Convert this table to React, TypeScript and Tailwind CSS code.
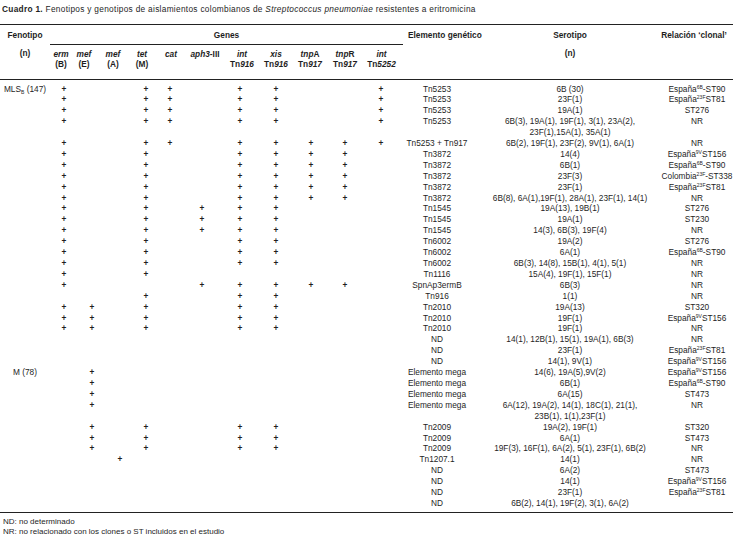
import React from 'react';

const Sup = ({ t }: { t: string }) => (
  <span className="relative -top-[3px] text-[5px] leading-[0]">{t}</span>
);
const Esp = (s: string, rest: string) => (
  <span>
    España
    <Sup t={s} />
    {rest}
  </span>
);

type Row = {
  fen?: React.ReactNode;
  p: number[];
  el: string;
  sero: React.ReactNode;
  rel: React.ReactNode;
};

const A = [0, 3, 4, 6, 7, 10];
const B = [0, 3, 4, 6, 7, 8, 9, 10];
const C = [0, 3, 6, 7, 8, 9];
const D = [0, 3, 5, 6, 7];
const F = [0, 3, 6, 7];
const G = [0, 1, 3, 6, 7];
const H = [1, 3, 6, 7];

const rows: Row[] = [
  {
    fen: (
      <span>
        MLS
        <span className="relative top-[2px] text-[5px] leading-[0]">B</span>
        &nbsp;(147)
      </span>
    ),
    p: A,
    el: 'Tn5253',
    sero: '6B (30)',
    rel: Esp('6B', '-ST90'),
  },
  { p: A, el: 'Tn5253', sero: '23F(1)', rel: Esp('23F', 'ST81') },
  { p: A, el: 'Tn5253', sero: '19A(1)', rel: 'ST276' },
  {
    p: A,
    el: 'Tn5253',
    sero: (
      <>
        <div>6B(3), 19A(1), 19F(1), 3(1), 23A(2),</div>
        <div>23F(1),15A(1), 35A(1)</div>
      </>
    ),
    rel: 'NR',
  },
  { p: B, el: 'Tn5253 + Tn917', sero: '6B(2), 19F(1), 23F(2), 9V(1), 6A(1)', rel: 'NR' },
  { p: C, el: 'Tn3872', sero: '14(4)', rel: Esp('9V', 'ST156') },
  { p: C, el: 'Tn3872', sero: '6B(1)', rel: Esp('6B', '-ST90') },
  {
    p: C,
    el: 'Tn3872',
    sero: '23F(3)',
    rel: (
      <span>
        Colombia
        <Sup t="23F" />
        -ST338
      </span>
    ),
  },
  { p: C, el: 'Tn3872', sero: '23F(1)', rel: Esp('23F', 'ST81') },
  { p: C, el: 'Tn3872', sero: '6B(8), 6A(1),19F(1), 28A(1), 23F(1), 14(1)', rel: 'NR' },
  { p: D, el: 'Tn1545', sero: '19A(13), 19B(1)', rel: 'ST276' },
  { p: D, el: 'Tn1545', sero: '19A(1)', rel: 'ST230' },
  { p: D, el: 'Tn1545', sero: '14(3), 6B(3), 19F(4)', rel: 'NR' },
  { p: F, el: 'Tn6002', sero: '19A(2)', rel: 'ST276' },
  { p: F, el: 'Tn6002', sero: '6A(1)', rel: Esp('6B', '-ST90') },
  { p: F, el: 'Tn6002', sero: '6B(3), 14(8), 15B(1), 4(1), 5(1)', rel: 'NR' },
  { p: [0, 3], el: 'Tn1116', sero: '15A(4), 19F(1), 15F(1)', rel: 'NR' },
  { p: [0, 5, 6, 7, 8, 9], el: 'SpnAp3ermB', sero: '6B(3)', rel: 'NR' },
  { p: [3, 6, 7], el: 'Tn916', sero: '1(1)', rel: 'NR' },
  { p: G, el: 'Tn2010', sero: '19A(13)', rel: 'ST320' },
  { p: G, el: 'Tn2010', sero: '19F(1)', rel: Esp('9V', 'ST156') },
  { p: G, el: 'Tn2010', sero: '19F(1)', rel: 'NR' },
  { p: [], el: 'ND', sero: '14(1), 12B(1), 15(1), 19A(1), 6B(3)', rel: 'NR' },
  { p: [], el: 'ND', sero: '23F(1)', rel: Esp('23F', 'ST81') },
  { p: [], el: 'ND', sero: '14(1), 9V(1)', rel: Esp('9V', 'ST156') },
  { fen: 'M (78)', p: [1], el: 'Elemento mega', sero: '14(6), 19A(5),9V(2)', rel: Esp('9V', 'ST156') },
  { p: [1], el: 'Elemento mega', sero: '6B(1)', rel: Esp('6B', '-ST90') },
  { p: [1], el: 'Elemento mega', sero: '6A(15)', rel: 'ST473' },
  {
    p: [1],
    el: 'Elemento mega',
    sero: (
      <>
        <div>6A(12), 19A(2), 14(1), 18C(1), 21(1),</div>
        <div>23B(1), 1(1),23F(1)</div>
      </>
    ),
    rel: 'NR',
  },
  { p: H, el: 'Tn2009', sero: '19A(2), 19F(1)', rel: 'ST320' },
  { p: H, el: 'Tn2009', sero: '6A(1)', rel: 'ST473' },
  { p: H, el: 'Tn2009', sero: '19F(3), 16F(1), 6A(2), 5(1), 23F(1), 6B(2)', rel: 'NR' },
  { p: [2], el: 'Tn1207.1', sero: '14(1)', rel: 'NR' },
  { p: [], el: 'ND', sero: '6A(2)', rel: 'ST473' },
  { p: [], el: 'ND', sero: '14(1)', rel: Esp('9V', 'ST156') },
  { p: [], el: 'ND', sero: '23F(1)', rel: Esp('23F', 'ST81') },
  { p: [], el: 'ND', sero: '6B(2), 14(1), 19F(2), 3(1), 6A(2)', rel: '' },
];

const geneHeads: [React.ReactNode, React.ReactNode][] = [
  [<i>erm</i>, '(B)'],
  [<i>mef</i>, '(E)'],
  [<i>mef</i>, '(A)'],
  [<i>tet</i>, '(M)'],
  [<i>cat</i>, ''],
  [<span><i>aph3</i>-III</span>, ''],
  [<i>int</i>, <span>Tn<i>916</i></span>],
  [<i>xis</i>, <span>Tn<i>916</i></span>],
  [<span><i>tnp</i>A</span>, <span>Tn<i>917</i></span>],
  [<span><i>tnp</i>R</span>, <span>Tn<i>917</i></span>],
  [<i>int</i>, <span>Tn<i>5252</i></span>],
];

export default function App() {
  return (
    <div className="w-[733px] h-[541px] overflow-hidden bg-white text-[#1e1e1e] font-['Liberation_Sans',Arial,sans-serif] text-[8.3px]">
      <div className="pl-[2px] pt-[3px] leading-[12px] whitespace-nowrap tracking-[0.3px]">
        <b>Cuadro 1.</b> Fenotipos y genotipos de aislamientos colombianos de{' '}
        <i>Streptococcus pneumoniae</i> resistentes a eritromicina
      </div>

      <div className="mt-[9px]">
        {/* header */}
        <div className="flex h-[56px] border-y border-[#222] font-bold">
          <div className="w-[50px] flex flex-col items-center pt-[5px] leading-[11px] whitespace-nowrap">
            <div>Fenotipo</div>
            <div className="mt-[6.5px]">(n)</div>
          </div>
          <div className="w-[353px] flex flex-col pt-[5px]">
            <div className="text-center leading-[11px] pb-[3px] border-b border-[#222]">Genes</div>
            <div className="grid grid-cols-[22px_24px_34px_24px_34px_34px_40px_28px_40px_30px_43px] pt-[4px] leading-[10px]">
              {geneHeads.map(([a, b], i) => (
                <div key={i} className="flex flex-col items-center whitespace-nowrap">
                  <div>{a}</div>
                  <div>{b}</div>
                </div>
              ))}
            </div>
          </div>
          <div className="w-[71px] pl-[5px] pt-[5px] leading-[11px] whitespace-nowrap">Elemento genético</div>
          <div className="w-[192px] flex flex-col items-center pt-[5px] leading-[11px]">
            <div>Serotipo</div>
            <div className="mt-[6.5px]">(n)</div>
          </div>
          <div className="w-[62px] flex justify-center pr-[6px] pt-[5px] leading-[11px] whitespace-nowrap">
            Relación ‘clonal’
          </div>
        </div>

        {/* body */}
        <div className="pt-[3.5px] pb-[3.4px] border-b border-[#222] leading-[10.9px]">
          {rows.map((r, idx) => (
            <div
              key={idx}
              className="grid grid-cols-[50px_28px_28px_28px_24px_24px_40px_36px_36px_34px_34px_38px_74px_192px_62px]"
            >
              <div className="flex justify-center whitespace-nowrap">{r.fen ?? ''}</div>
              {Array.from({ length: 11 }).map((_, i) => (
                <div key={i} className="flex justify-center font-bold">
                  {r.p.includes(i) ? '+' : ''}
                </div>
              ))}
              <div className="flex justify-center whitespace-nowrap">{r.el}</div>
              <div className="flex flex-col items-center whitespace-nowrap">{r.sero}</div>
              <div className="flex justify-center whitespace-nowrap">{r.rel}</div>
            </div>
          ))}
        </div>

        <div className="pl-[3px] pt-[4px] text-[8px] leading-[9.5px]">
          <div>ND: no determinado</div>
          <div>NR: no relacionado con los clones o ST incluidos en el estudio</div>
        </div>
      </div>
    </div>
  );
}
